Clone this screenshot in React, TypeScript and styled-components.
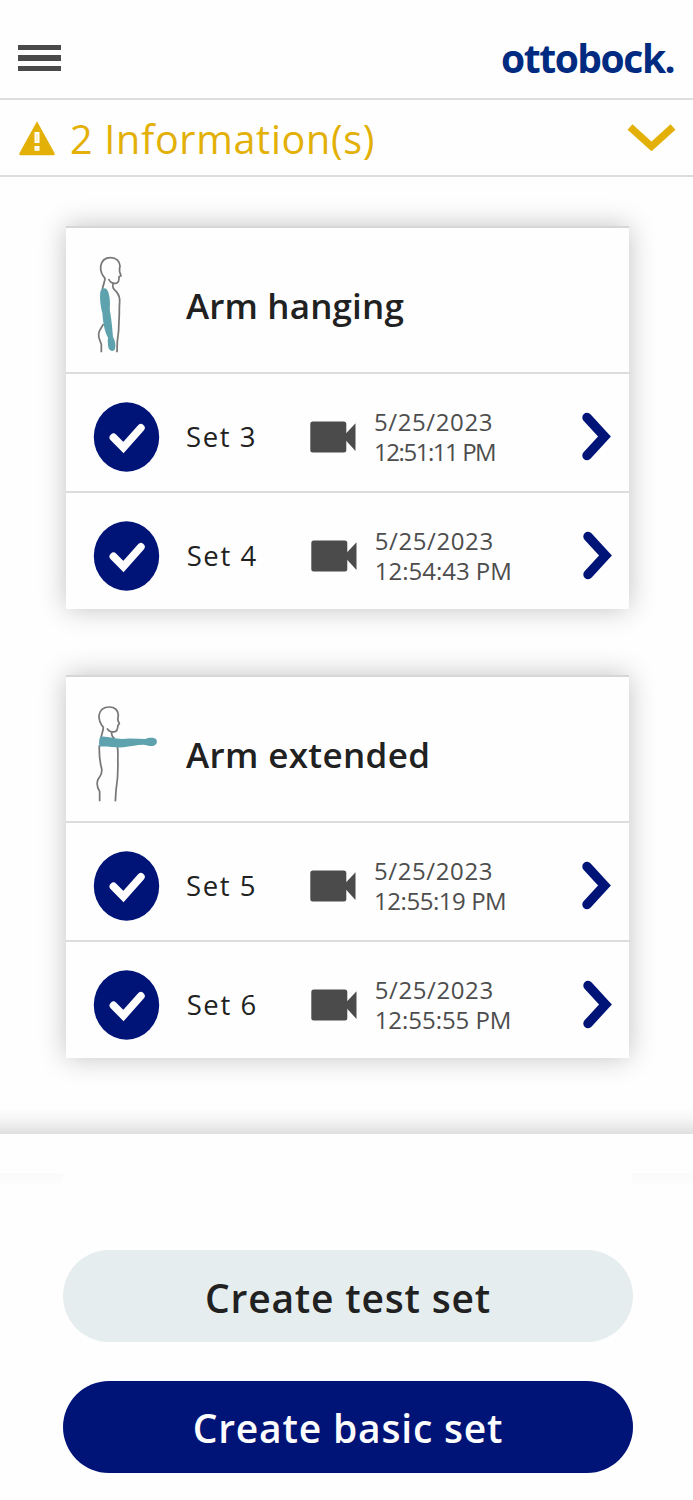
import React from "react";
import styled, { createGlobalStyle } from "styled-components";

const Global = createGlobalStyle`
  * { box-sizing: border-box; }
  body { margin: 0; background: #fefefe; font-family: "Open Sans", "Noto Sans", sans-serif; color: #212121; }
`;

const navy = "#001478";
const amber = "#e2b007";

const Screen = styled.div`
  width: 693px;
  height: 1500px;
  display: flex;
  flex-direction: column;
  overflow: hidden;
`;

const Header = styled.header`
  height: 100px;
  flex: none;
  display: flex;
  justify-content: space-between;
  align-items: flex-start;
  padding: 0 18px;
  border-bottom: 2px solid #dcdddc;
`;

const MenuIcon = styled.div`
  width: 43px;
  height: 26px;
  margin-top: 45px;
  display: flex;
  flex-direction: column;
  justify-content: space-between;
`;

const MenuBar = styled.span`
  height: 5.4px;
  background: #4a4a4a;
`;

const Logo = styled.div`
  width: 174px;
  margin-top: 33px;
  font: 700 39px/50px "Open Sans", sans-serif;
  letter-spacing: -1.45px;
  color: #002b80;
  white-space: nowrap;
`;

const InfoBar = styled.section`
  height: 77px;
  flex: none;
  display: flex;
  align-items: center;
  padding: 0 17px 0 18px;
  border-bottom: 2px solid #dcdddc;
  color: ${amber};
`;

const InfoText = styled.span`
  flex: 1;
  margin-left: 14px;
  padding-top: 2px;
  font-size: 39.5px;
  line-height: 52px;
  letter-spacing: 0.7px;
  white-space: nowrap;
`;

const List = styled.main`
  height: 957px;
  flex: none;
  display: flex;
  flex-direction: column;
  gap: 66px;
  padding: 49px 64px 0 66px;
  overflow: hidden;
`;

const Card = styled.article`
  height: 383px;
  flex: none;
  background: #fefefe;
  border-top: 2px solid #d6d6d6;
  box-shadow: 0 0 26px rgba(0, 0, 0, 0.24);
`;

const CardHeader = styled.div`
  height: 144px;
  display: flex;
  align-items: center;
  padding-left: 24px;
`;

const Title = styled.h2`
  margin: 11px 0 0 26px;
  font-size: 35px;
  line-height: 48px;
  font-weight: 600;
  letter-spacing: ${(p: { $spacing: number }) => p.$spacing}px;
  white-space: nowrap;
`;

const Row = styled.div<{ $shift: number }>`
  height: 119px;
  display: grid;
  grid-template-columns: 93px 124px 64px 208px 1fr;
  align-items: center;
  padding: 8px 0 0 27px;
  border-top: 2px solid #dcdcdc;
  & > :not(:first-child) { margin-left: ${(p) => p.$shift}px; }
`;

const SetName = styled.span`
  font-size: 27.5px;
  line-height: 36px;
  letter-spacing: 1.6px;
  white-space: nowrap;
`;

const Stamp = styled.div`
  font-size: 24px;
  line-height: 30px;
  color: #4d4d4d;
  white-space: nowrap;
`;

const Line = styled.div<{ $spacing: number }>`
  letter-spacing: ${(p) => p.$spacing}px;
`;

const Footer = styled.footer`
  flex: 1;
  display: flex;
  flex-direction: column;
  background: #fefefe;
`;

const Fade = styled.div`
  height: 26px;
  flex: none;
  margin-top: -26px;
  background: linear-gradient(rgba(0, 0, 0, 0), rgba(0, 0, 0, 0.03) 40%, rgba(0, 0, 0, 0.12));
`;

const Band = styled.div`
  height: 12px;
  flex: none;
  margin-top: 39px;
  display: flex;
  justify-content: space-between;
`;

const BandEdge = styled.span<{ $w: number }>`
  width: ${(p) => p.$w}px;
  background: linear-gradient(#fafafa, #fdfdfd);
`;

const Actions = styled.div`
  display: flex;
  flex-direction: column;
  gap: 38.5px;
  padding: 65px 60px 0 63px;
`;

const Button = styled.button<{ $primary?: boolean; $spacing: number }>`
  height: 92px;
  border: 0;
  border-radius: 46px;
  padding: ${(p) => (p.$primary ? 2 : 4)}px 0 0;
  font: 600 39px/52px "Open Sans", sans-serif;
  letter-spacing: ${(p) => p.$spacing}px;
  color: ${(p) => (p.$primary ? "#fdfdfd" : "#212121")};
  background: ${(p) => (p.$primary ? navy : "#e5edee")};
`;

const Warning = () => (
  <svg width="38" height="36" viewBox="0 0 38 36">
    <path d="M19 1.2 L36.5 33 Q37.4 35.2 35.4 35.2 H2.6 Q.6 35.2 1.5 33Z" fill={amber} />
    <path d="M16.5 12h5v11h-5zM16.5 26h5v4.8h-5z" fill="#fefefe" />
    <path d="M18.2 14h1.6v7h-1.6zM18.2 27.6h1.6v1.6h-1.6z" fill="#faeec4" />
  </svg>
);

const ChevronDown = () => (
  <svg width="49" height="28" viewBox="0 0 49 28">
    <path d="M3 3 L24.5 22.5 L46 3" fill="none" stroke={amber} strokeWidth="7.2" />
  </svg>
);

const ChevronRight = () => (
  <svg width="30" height="50" viewBox="0 0 30 50">
    <path d="M5 5.5 L22.5 24.5 L5 43.5" fill="none" stroke={navy} strokeWidth="9.4" strokeLinecap="round" />
  </svg>
);

const Check = () => (
  <svg width="67" height="70" viewBox="0 0 67 70">
    <ellipse cx="33.5" cy="35" rx="32.7" ry="34.7" fill={navy} />
    <path d="M20.5 35.5 L30.4 45.5 L47.8 26" fill="none" stroke="#fefefe" strokeWidth="7.8" strokeLinecap="round" />
  </svg>
);

const Camera = () => (
  <svg width="46" height="32" viewBox="0 0 46 32">
    <rect x="0.3" y="0.5" width="36" height="31" rx="2.5" fill="#4b4b4b" />
    <path d="M35 13.5 L45.5 2.3 V30 L35 18.5Z" fill="#4b4b4b" />
  </svg>
);

const FigureSvg = styled.svg`
  margin-top: 10px;
`;

const Figure = ({ extended }: { extended?: boolean }) => (
  <FigureSvg width="70" height="100" viewBox={extended ? "120 130 210 300" : "120 120 210 300"}>
    {extended ? (
      <>
        <g fill="none" stroke="#777" strokeWidth="5.2" strokeLinejoin="round">
          <path d="M153 232 C156 217 160 209 160 200 C151 189 146 178 147 164 C150 146 162 139 178 139 C194 139 205 149 205 163 C204 170 203 175 204 180 L208 189 L204 194 C203 204 202 212 195 213 C184 215 175 210 171 203" />
          <path d="M185 214 C184 223 186 228 193 233" />
          <path d="M148 254 C147 282 149 302 155 324 C158 342 150 346 144 356 C139 368 143 383 149 393 V422" />
          <path d="M202 256 C206 280 202 290 204 311 C204 336 202 366 198 390 L196 422" />
        </g>
        <path d="M151 228 C174 226 194 235 216 235 C240 231 263 235 286 235 C296 230 311 230 318 235 C323 243 321 252 311 255 C300 258 291 253 280 252 C261 252 242 257 220 260 C196 261 173 257 149 258 C146 248 147 234 151 228Z" fill="#5ea2ae" />
      </>
    ) : (
      <>
        <g fill="none" stroke="#777" strokeWidth="5.2" strokeLinejoin="round">
          <path d="M157 223 C160 207 165 199 165 190 C155 179 151 169 152 154 C155 136 167 128 182 128 C199 128 210 139 210 153 C208 161 208 165 209 170 L213 182 L207 185 C208 197 206 203 198 205 C187 206 179 200 176 192" />
          <path d="M190 204 C185 218 192 223 199 230 C208 241 210 249 209 261 C207 281 209 295 207 315 C207 345 205 362 202 379 L201 412" />
          <path d="M160 327 C158 335 148 342 146 356 C144 370 151 377 154 388 V412" />
        </g>
        <path d="M151 231 C152 221 160 217 169 221 C177 230 180 249 180 269 C179 280 179 285 181 295 C185 318 187 343 189 366 C195 376 199 392 194 404 C187 411 178 408 175 397 C173 385 173 375 174 368 C163 348 159 321 157 294 C151 272 149 247 151 231Z" fill="#5ea2ae" />
      </>
    )}
  </FigureSvg>
);

const groups = [
  {
    title: "Arm hanging",
    spacing: 0.15,
    sets: [
      { name: "Set 3", date: "5/25/2023", time: "12:51:11 PM", spacing: -1.45 },
      { name: "Set 4", date: "5/25/2023", time: "12:54:43 PM", spacing: 0 },
    ],
  },
  {
    title: "Arm extended",
    spacing: 0.35,
    extended: true,
    sets: [
      { name: "Set 5", date: "5/25/2023", time: "12:55:19 PM", spacing: -0.45 },
      { name: "Set 6", date: "5/25/2023", time: "12:55:55 PM", spacing: -0.05 },
    ],
  },
];

export default function App() {
  return (
    <Screen>
      <Global />
      <Header>
        <MenuIcon>
          <MenuBar />
          <MenuBar />
          <MenuBar />
        </MenuIcon>
        <Logo>ottobock.</Logo>
      </Header>
      <InfoBar>
        <Warning />
        <InfoText>2 Information(s)</InfoText>
        <ChevronDown />
      </InfoBar>
      <List>
        {groups.map((g) => (
          <Card key={g.title}>
            <CardHeader>
              <Figure extended={g.extended} />
              <Title $spacing={g.spacing}>{g.title}</Title>
            </CardHeader>
            {g.sets.map((s, i) => (
              <Row key={s.name} $shift={i * 0.7}>
                <Check />
                <SetName>{s.name}</SetName>
                <Camera />
                <Stamp>
                  <Line $spacing={0.6}>{s.date}</Line>
                  <Line $spacing={s.spacing}>{s.time}</Line>
                </Stamp>
                <ChevronRight />
              </Row>
            ))}
          </Card>
        ))}
      </List>
      <Footer>
        <Fade />
        <Band>
          <BandEdge $w={63} />
          <BandEdge $w={61} />
        </Band>
        <Actions>
          <Button $spacing={0.8}>Create test set</Button>
          <Button $primary $spacing={0.8}>
            Create basic set
          </Button>
        </Actions>
      </Footer>
    </Screen>
  );
}
